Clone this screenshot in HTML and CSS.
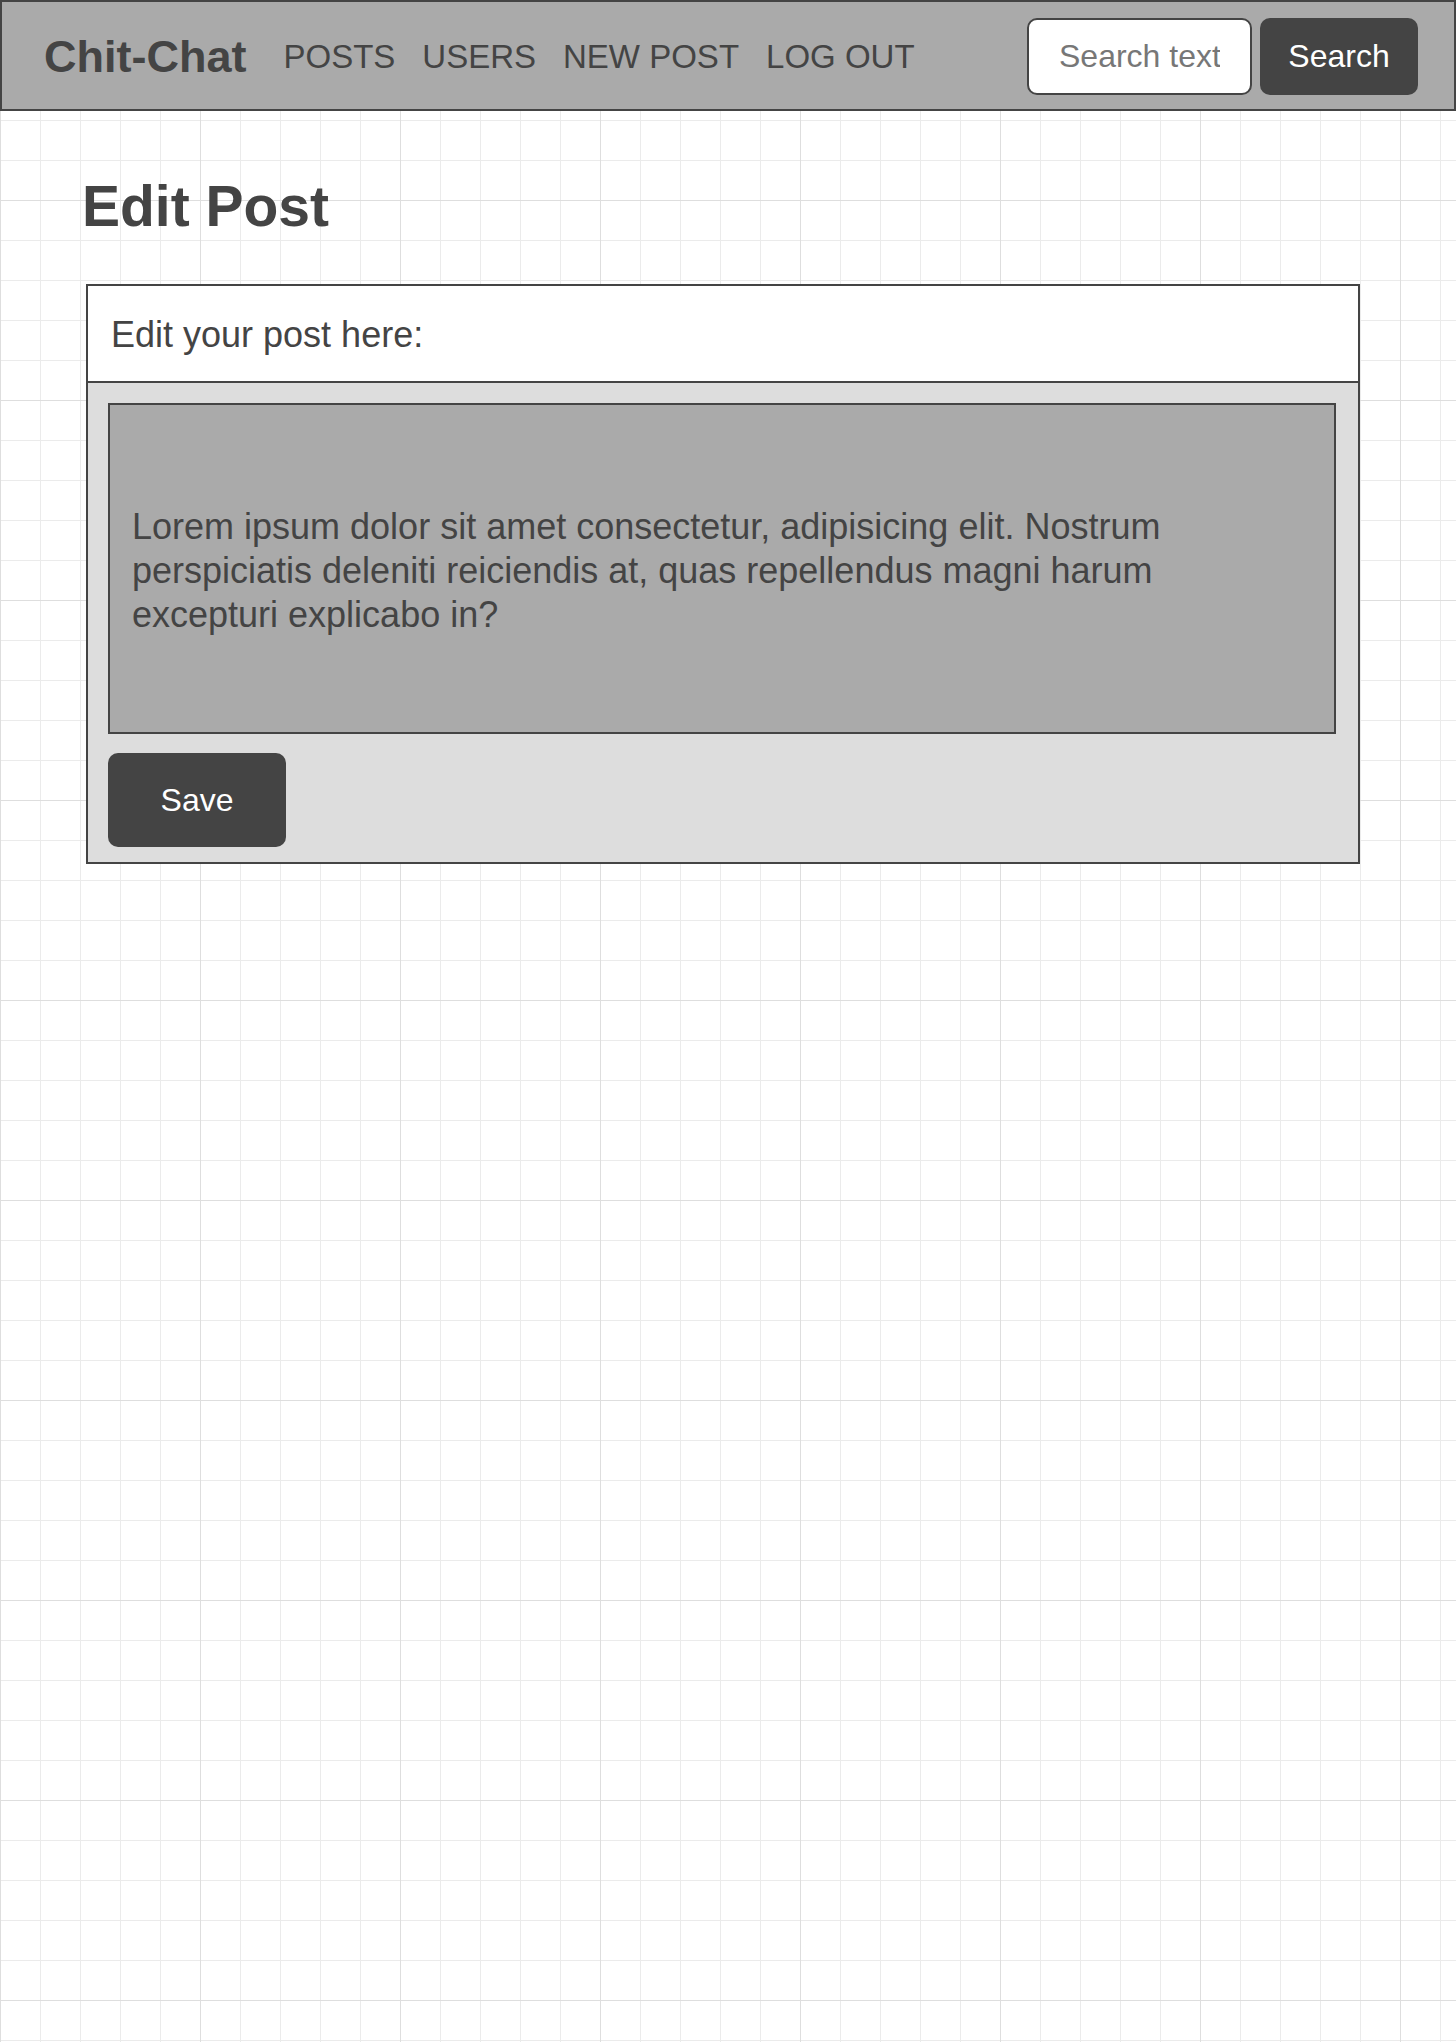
FILE: index.html
```html
<!DOCTYPE html>
<html lang="en">
<head>
<meta charset="utf-8">
<title>Chit-Chat – Edit Post</title>
<link rel="stylesheet" href="styles.css">
</head>
<body>
<header class="topbar">
  <a class="brand" href="#">Chit-Chat</a>
  <nav class="nav">
    <a class="nav-link" href="#">POSTS</a>
    <a class="nav-link" href="#">USERS</a>
    <a class="nav-link" href="#">NEW POST</a>
    <a class="nav-link" href="#">LOG OUT</a>
  </nav>
  <form class="search">
    <input class="search-input" type="text" placeholder="Search text">
    <button class="search-btn" type="button">Search</button>
  </form>
</header>
<main class="page">
  <h1 class="page-title">Edit Post</h1>
  <section class="card">
    <div class="card-header">Edit your post here:</div>
    <div class="card-body">
      <div class="post-text">Lorem ipsum dolor sit amet consectetur, adipisicing elit. Nostrum perspiciatis deleniti reiciendis at, quas repellendus magni harum excepturi explicabo in?</div>
      <button class="save-btn" type="button">Save</button>
    </div>
  </section>
</main>
</body>
</html>
```

FILE: styles.css
```css
* { box-sizing: border-box; }

html, body {
  margin: 0;
  padding: 0;
  min-height: 100%;
}

body {
  font-family: "Liberation Sans", Arial, sans-serif;
  color: #444;
  background-color: #fff;
  background-image:
    linear-gradient(to right, #dedede 1px, transparent 1px),
    linear-gradient(to bottom, #dedede 1px, transparent 1px),
    linear-gradient(to right, #ebebeb 1px, transparent 1px),
    linear-gradient(to bottom, #ebebeb 1px, transparent 1px);
  background-size: 200px 200px, 200px 200px, 40px 40px, 40px 40px;
  min-height: 2042px;
}

.topbar {
  display: flex;
  align-items: center;
  height: 111px;
  background: #aaa;
  border: 2px solid #444;
  padding: 2px 36px 0 42px;
}

.brand {
  font-size: 45px;
  font-weight: bold;
  color: #444;
  text-decoration: none;
  margin-right: 37px;
}

.nav {
  display: flex;
  gap: 27px;
  padding-top: 1px;
}

.nav-link {
  font-size: 33px;
  color: #444;
  text-decoration: none;
}

.search {
  margin: 0 0 0 auto;
  display: flex;
  gap: 8px;
}

.search-input {
  width: 225px;
  height: 77px;
  border: 2px solid #444;
  border-radius: 10px;
  background: #fff;
  padding: 0 30px;
  font-family: inherit;
  font-size: 32px;
  color: #444;
  outline: none;
}

.search-input::placeholder {
  color: #777;
}

.search-btn {
  width: 158px;
  height: 77px;
  border: none;
  border-radius: 10px;
  background: #444;
  color: #fff;
  font-family: inherit;
  font-size: 32px;
}

.page {
  padding: 0 0 0 82px;
}

.page-title {
  margin: 62px 0 45px;
  font-size: 57px;
  font-weight: bold;
  line-height: normal;
}

.card {
  width: 1274px;
  margin-left: 4px;
  border: 2px solid #444;
}

.card-header {
  background: #fff;
  font-size: 36px;
  line-height: 41px;
  padding: 28px 23px 26px;
  border-bottom: 2px solid #444;
}

.card-body {
  background: #ddd;
  padding: 20px 22px 15px 20px;
  display: flex;
  flex-direction: column;
  align-items: flex-start;
  gap: 19px;
}

.post-text {
  width: 100%;
  height: 331px;
  display: flex;
  align-items: center;
  background: #aaa;
  border: 2px solid #444;
  padding: 4px 32px 0 22px;
  font-size: 36px;
  line-height: 44px;
}

.save-btn {
  width: 178px;
  height: 94px;
  border: none;
  border-radius: 10px;
  background: #444;
  color: #fff;
  font-family: inherit;
  font-size: 32px;
}
```
